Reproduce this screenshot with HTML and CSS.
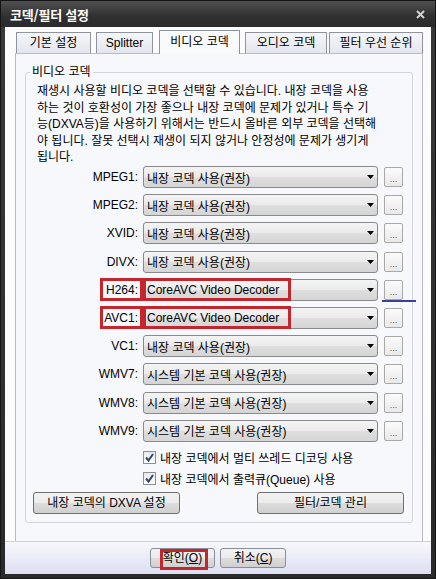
FILE: index.html
```html
<!DOCTYPE html>
<html lang="ko">
<head>
<meta charset="utf-8">
<title>코덱/필터 설정</title>
<link rel="stylesheet" href="styles.css">
</head>
<body>
<div class="window">
  <div class="titlebar">
    <span class="title">코덱/필터 설정</span>
    <svg class="close" width="9" height="9" viewBox="0 0 9 9"><path d="M1 1L8 8M8 1L1 8" stroke="#d2d2d2" stroke-width="2"/></svg>
  </div>
  <div class="client">
    <div class="tabs">
      <div class="tab t1">기본 설정</div>
      <div class="tab t2">Splitter</div>
      <div class="tab t3 active">비디오 코덱</div>
      <div class="tab t4">오디오 코덱</div>
      <div class="tab t5">필터 우선 순위</div>
    </div>
    <div class="page">
      <fieldset class="group">
        <legend>비디오 코덱</legend>
        <p class="desc">재생시 사용할 비디오 코덱을 선택할 수 있습니다. 내장 코덱을 사용<br>하는 것이 호환성이 가장 좋으나 내장 코덱에 문제가 있거나 특수 기<br>능(DXVA등)을 사용하기 위해서는 반드시 올바른 외부 코덱을 선택해<br>야 됩니다. 잘못 선택시 재생이 되지 않거나 안정성에 문제가 생기게<br>됩니다.</p>
        <div class="rows">
          <div class="row"><label>MPEG1:</label><div class="combo"><span>내장 코덱 사용(권장)</span><svg class="arrow" width="7" height="4" viewBox="0 0 7 4"><path d="M0 0H7L3.5 4Z" fill="#000"/></svg></div><button class="more">...</button></div>
          <div class="row"><label>MPEG2:</label><div class="combo"><span>내장 코덱 사용(권장)</span><svg class="arrow" width="7" height="4" viewBox="0 0 7 4"><path d="M0 0H7L3.5 4Z" fill="#000"/></svg></div><button class="more">...</button></div>
          <div class="row"><label>XVID:</label><div class="combo"><span>내장 코덱 사용(권장)</span><svg class="arrow" width="7" height="4" viewBox="0 0 7 4"><path d="M0 0H7L3.5 4Z" fill="#000"/></svg></div><button class="more">...</button></div>
          <div class="row"><label>DIVX:</label><div class="combo"><span>내장 코덱 사용(권장)</span><svg class="arrow" width="7" height="4" viewBox="0 0 7 4"><path d="M0 0H7L3.5 4Z" fill="#000"/></svg></div><button class="more">...</button></div>
          <div class="row"><label>H264:</label><div class="combo"><span>CoreAVC Video Decoder</span><svg class="arrow" width="7" height="4" viewBox="0 0 7 4"><path d="M0 0H7L3.5 4Z" fill="#000"/></svg></div><button class="more">...</button><span class="mark mark-label"></span><span class="mark mark-value"></span><span class="blue-line"></span></div>
          <div class="row"><label>AVC1:</label><div class="combo"><span>CoreAVC Video Decoder</span><svg class="arrow" width="7" height="4" viewBox="0 0 7 4"><path d="M0 0H7L3.5 4Z" fill="#000"/></svg></div><button class="more">...</button><span class="mark mark-label"></span><span class="mark mark-value"></span></div>
          <div class="row"><label>VC1:</label><div class="combo"><span>내장 코덱 사용(권장)</span><svg class="arrow" width="7" height="4" viewBox="0 0 7 4"><path d="M0 0H7L3.5 4Z" fill="#000"/></svg></div><button class="more">...</button></div>
          <div class="row"><label>WMV7:</label><div class="combo"><span>시스템 기본 코덱 사용(권장)</span><svg class="arrow" width="7" height="4" viewBox="0 0 7 4"><path d="M0 0H7L3.5 4Z" fill="#000"/></svg></div><button class="more">...</button></div>
          <div class="row"><label>WMV8:</label><div class="combo"><span>시스템 기본 코덱 사용(권장)</span><svg class="arrow" width="7" height="4" viewBox="0 0 7 4"><path d="M0 0H7L3.5 4Z" fill="#000"/></svg></div><button class="more">...</button></div>
          <div class="row"><label>WMV9:</label><div class="combo"><span>시스템 기본 코덱 사용(권장)</span><svg class="arrow" width="7" height="4" viewBox="0 0 7 4"><path d="M0 0H7L3.5 4Z" fill="#000"/></svg></div><button class="more">...</button></div>
        </div>
        <div class="checks">
          <div class="check"><span class="box"><svg width="11" height="11" viewBox="0 0 11 11"><path d="M2 5.5L4.5 8.5L9 2" fill="none" stroke="#34466b" stroke-width="2"/></svg></span><span>내장 코덱에서 멀티 쓰레드 디코딩 사용</span></div>
          <div class="check"><span class="box"><svg width="11" height="11" viewBox="0 0 11 11"><path d="M2 5.5L4.5 8.5L9 2" fill="none" stroke="#34466b" stroke-width="2"/></svg></span><span>내장 코덱에서 출력큐(Queue) 사용</span></div>
        </div>
        <div class="actions">
          <button class="btn wide">내장 코덱의 DXVA 설정</button>
          <button class="btn wide">필터/코덱 관리</button>
        </div>
      </fieldset>
    </div>
    <div class="footer">
      <button class="btn small ok">확인(<u>O</u>)<span class="mark mark-ok"></span></button>
      <button class="btn small cancel">취소(<u>C</u>)</button>
    </div>
  </div>
</div>
</body>
</html>
```
FILE: styles.css
```css
html, body {
  margin: 0;
  padding: 0;
}
body {
  background: #222;
  font-family: "Liberation Sans", "Noto Sans CJK KR", sans-serif;
  font-size: 12px;
  color: #000;
}
.window {
  width: 436px;
  height: 579px;
  display: flex;
  flex-direction: column;
  background: linear-gradient(#3a3a3a, #2a2a2a);
  box-sizing: border-box;
  border: 1px solid #151515;
}
.titlebar {
  height: 26px;
  display: flex;
  align-items: center;
  justify-content: space-between;
  padding: 0 10px 0 9px;
  background: linear-gradient(#505050, #303030 60%, #2a2a2a);
  color: #fff;
  box-sizing: border-box;
}
.title {
  font-family: "Noto Sans CJK KR", sans-serif;
  font-weight: bold;
  font-size: 13px;
  letter-spacing: -0.2px;
}
.close {
  display: block;
}
.client {
  flex: 1;
  margin: 0 4px 4px;
  background: #fcfcfd;
  display: flex;
  flex-direction: column;
}
.tabs {
  height: 26px;
  display: flex;
  align-items: flex-end;
  padding-left: 11px;
  box-sizing: border-box;
}
.tab {
  height: 21px;
  box-sizing: border-box;
  border: 1px solid #8f939c;
  border-bottom: none;
  background: linear-gradient(#f5f6f9, #e3e6ee);
  display: flex;
  align-items: center;
  justify-content: center;
  line-height: 1;
  white-space: nowrap;
}
.t1 { width: 75px; }
.t2 { width: 57px; margin-left: 5px; }
.t3 { width: 81px; margin-left: 6px; }
.t4 { width: 82px; margin-left: 5px; }
.t5 { width: 94px; margin-left: 2px; }
.tab.active {
  height: 24px;
  margin-bottom: -1px;
  background: #f9fafc;
  position: relative;
  z-index: 1;
  padding-bottom: 2px;
}
.page {
  height: 488px;
  margin: 0 8px 0 10px;
  border: 1px solid #b8bcc5;
  border-bottom: none;
  background: #f7f8fb;
  box-sizing: border-box;
}
.group {
  margin: 10px 9px 0;
  padding: 0 9px 8px 11px;
  border: 1px solid #d2d5dc;
  border-radius: 3px;
  min-width: 0;
}
.group legend {
  padding: 0 2px;
  margin-left: -7px;
  line-height: 16px;
  font-size: 12px;
}
.desc {
  margin: 3px 0 0;
  line-height: 16.5px;
  white-space: nowrap;
}
.rows {
  display: flex;
  flex-direction: column;
  gap: 6.2px;
  margin-top: 0.5px;
}
.row {
  position: relative;
  display: grid;
  grid-template-columns: 101px 235px 19px;
  column-gap: 5px;
  height: 22px;
}
.row label {
  text-align: right;
  align-self: center;
  white-space: nowrap;
}
.combo {
  height: 22px;
  box-sizing: border-box;
  border: 1px solid #8a8a8a;
  border-radius: 3px;
  background: linear-gradient(#f4f4f4, #ebebeb 48%, #dedede 52%, #d5d5d5);
  display: flex;
  align-items: center;
  padding: 0 0 0 3px;
  white-space: nowrap;
}
.combo .arrow {
  margin-left: auto;
  margin-right: 3px;
  display: block;
}
.more {
  width: 19px;
  height: 20px;
  margin: 1px 0 0 1px;
  padding: 0 0 2px;
  box-sizing: border-box;
  border: 1px solid #a9a9a9;
  border-radius: 2px;
  background: linear-gradient(#fbfbfb, #e9e9e9);
  font-family: "Liberation Sans", sans-serif;
  font-size: 9px;
  color: #555;
  display: flex;
  align-items: flex-end;
  justify-content: center;
  line-height: 1;
}
.mark {
  position: absolute;
  border: 3px solid #c4262e;
  box-sizing: border-box;
  pointer-events: none;
}
.mark-label {
  left: 63px;
  top: -1px;
  width: 43px;
  height: 23px;
}
.mark-value {
  left: 106px;
  top: -1px;
  width: 148px;
  height: 23px;
}
.blue-line {
  position: absolute;
  left: 345px;
  top: 21px;
  width: 34px;
  height: 2px;
  background: #3b3f97;
}
.checks {
  margin-top: 5px;
  padding-left: 106px;
}
.check {
  height: 21px;
  display: flex;
  align-items: center;
  gap: 4px;
  white-space: nowrap;
}
.box {
  width: 13px;
  height: 13px;
  box-sizing: border-box;
  border: 1px solid #8e8f90;
  background: linear-gradient(#e9e9e9, #fdfdfd);
  display: flex;
  align-items: center;
  justify-content: center;
}
.box svg {
  display: block;
}
.actions {
  display: flex;
  justify-content: space-between;
  margin: 3px -1px 0 -4px;
}
.btn {
  box-sizing: border-box;
  border: 1px solid #707070;
  border-radius: 3px;
  background: linear-gradient(#f3f3f3, #ebebeb 48%, #dddddd 52%, #d0d0d0);
  font-family: "Liberation Sans", "Noto Sans CJK KR", sans-serif;
  font-size: 12px;
  color: #000;
  padding: 0;
  line-height: 1;
  white-space: nowrap;
}
.btn.wide {
  width: 147px;
  height: 22px;
}
.footer {
  flex: 1;
  border-top: 1px solid #cdd0da;
  background: linear-gradient(#f7f8fc, #dcdff1);
  display: flex;
  justify-content: center;
  align-items: flex-start;
  gap: 5px;
  padding-top: 6px;
  box-sizing: border-box;
}
.btn.small {
  width: 65px;
  height: 20px;
  position: relative;
  border-color: #8a8d96;
}
.btn.cancel {
  width: 66px;
}
.mark-ok {
  left: 9px;
  top: 0;
  width: 48px;
  height: 21px;
}
```
